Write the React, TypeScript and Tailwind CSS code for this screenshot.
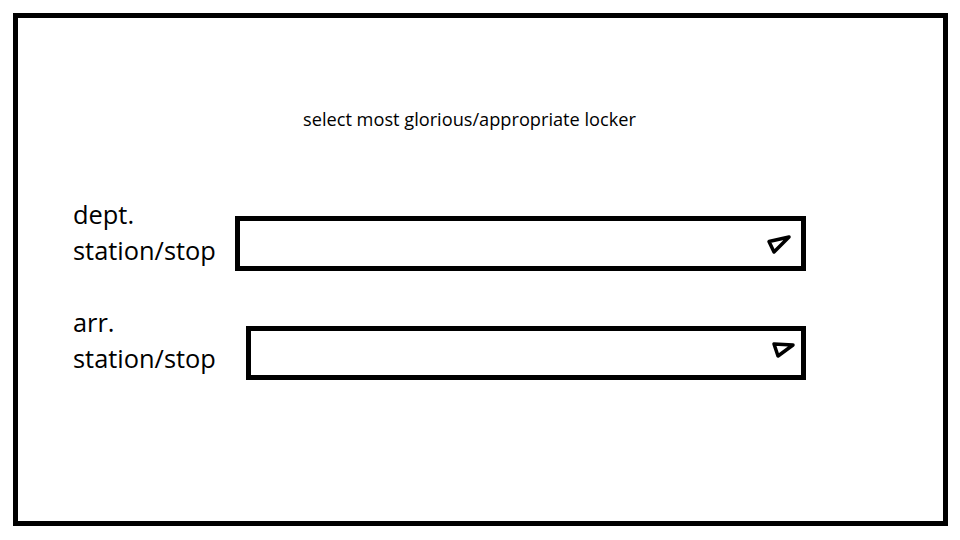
export default function App() {
  return (
    <div className="h-[540px] w-[960px] bg-white pl-[13px] pt-[13px] font-['Open_Sans',sans-serif] text-black">
      <div className="flex h-[513px] w-[935px] flex-col border-[5px] border-black">
        {/* heading */}
        <p className="mt-[89px] pl-[285px] text-[18.2px] leading-[24px]">
          select most glorious/appropriate locker
        </p>

        {/* departure */}
        <div className="mt-[65px] flex items-start pl-[55px]">
          <div className="w-[162px] shrink-0 text-[25.4px] leading-[36px]">
            dept.
            <br />
            station/stop
          </div>
          <div className="mt-[20px] flex h-[55px] w-[571px] items-start justify-end border-[5px] border-black pr-[9px] pt-[12px]">
            <svg width="26" height="24" viewBox="0 0 26 24" fill="none" stroke="black" strokeWidth="3.5" strokeLinejoin="round" strokeLinecap="round">
              <path d="M3 8.5 L23 4 L8 19 Z" />
            </svg>
          </div>
        </div>

        {/* arrival */}
        <div className="mt-[33px] flex items-start pl-[55px]">
          <div className="w-[162px] shrink-0 text-[25.4px] leading-[36px]">
            arr.
            <br />
            station/stop
          </div>
          <div className="ml-[11px] mt-[22px] flex h-[54px] w-[560px] items-start justify-end border-[5px] border-black pr-[4px] pt-[8px]">
            <svg width="26" height="20" viewBox="0 0 26 20" fill="none" stroke="black" strokeWidth="3.5" strokeLinejoin="round" strokeLinecap="round">
              <path d="M3 5 L22 6 L7 17 Z" />
            </svg>
          </div>
        </div>
      </div>
    </div>
  );
}
